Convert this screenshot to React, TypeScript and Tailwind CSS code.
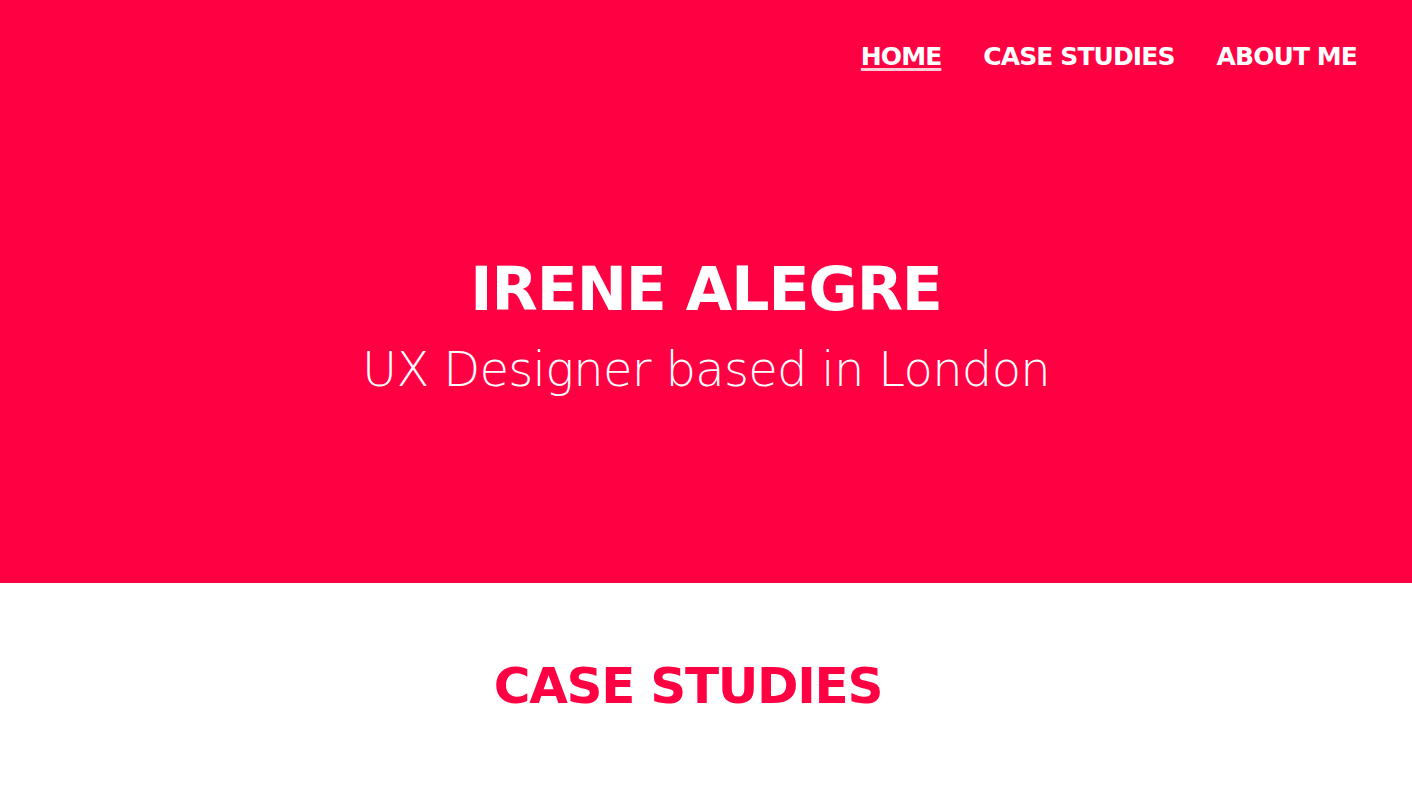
export default function App() {
  const nav = [
    { label: "HOME", active: true },
    { label: "CASE STUDIES", active: false },
    { label: "ABOUT ME", active: false },
  ];

  return (
    <div className="min-h-screen bg-white font-['DejaVu_Sans',sans-serif]">
      {/* Hero */}
      <header className="h-[583px] bg-[#ff0042] flex flex-col">
        <nav className="flex justify-end gap-[42px] pr-[55px] pt-[40px]">
          {nav.map((item) => (
            <a
              key={item.label}
              href="#"
              className={
                item.active
                  ? "text-white font-bold text-[25px] leading-[34px] tracking-[-0.9px] underline decoration-[3px] decoration-white/80 underline-offset-[3px]"
                  : "text-white font-bold text-[25px] leading-[34px] tracking-[-0.9px]"
              }
            >
              {item.label}
            </a>
          ))}
        </nav>

        <div className="flex flex-col items-center pt-[180px]">
          <h1 className="text-white font-bold text-[60px] leading-[70px] tracking-[-1px]">
            IRENE ALEGRE
          </h1>
          <p className="text-white font-light text-[48px] leading-[60px] mt-[15px] tracking-[-0.7px]">
            UX Designer based in London
          </p>
        </div>
      </header>

      {/* Case studies */}
      <section className="flex justify-center pt-[68px] pr-[36px]">
        <h2 className="text-[#ff0042] font-bold text-[50px] leading-[70px] tracking-[-1.3px]">
          CASE STUDIES
        </h2>
      </section>
    </div>
  );
}
